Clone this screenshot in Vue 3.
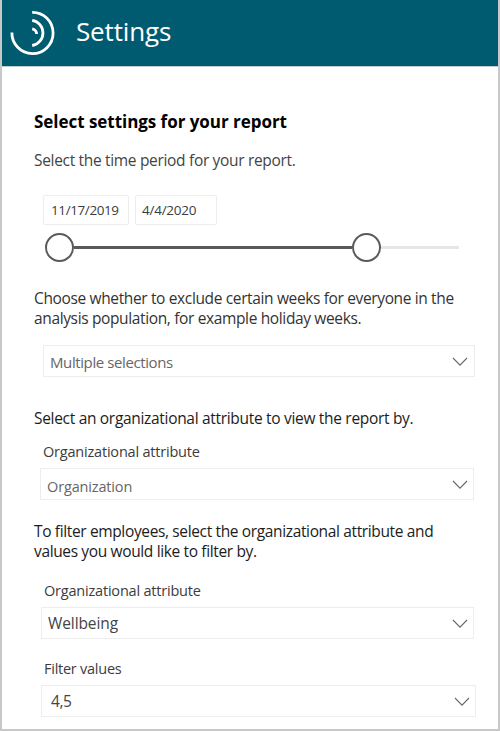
<script setup>
import { ref } from 'vue'

const start = ref('11/17/2019')
const end = ref('4/4/2020')
</script>

<template>
  <main class="panel">
    <header class="header">
      <svg class="logo" width="46" height="46" viewBox="0 0 46 46" fill="none" stroke="#fff" stroke-width="2.8">
        <path d="M22.2 2.4A20.6 20.6 0 1 1 1.9 22.5" />
        <path d="M22.2 10.4A12.7 12.7 0 0 1 22.2 35.5" />
        <path d="M22.2 18.8A5.2 5.2 0 0 1 26.6 24" />
      </svg>
      <h1 class="title">Settings</h1>
    </header>

    <section class="content">
      <h2 class="heading">Select settings for your report</h2>
      <p class="text period">Select the time period for your report.</p>

      <div class="dates">
        <span class="date first">{{ start }}</span>
        <span class="date second">{{ end }}</span>
      </div>
      <div class="slider">
        <i class="knob"></i>
        <i class="range"></i>
        <i class="knob"></i>
        <i class="rest"></i>
      </div>

      <p class="text exclude">Choose whether to exclude certain weeks for everyone in the<br />analysis population, for example holiday weeks.</p>
      <div class="select weeks">
        <span>Multiple selections</span>
        <svg width="16" height="10" viewBox="0 0 16 10"><path d="M1 1L8 8.2L15 1" /></svg>
      </div>

      <p class="text view">Select an organizational attribute to view the report by.</p>
      <p class="label view-label">Organizational attribute</p>
      <div class="select organization">
        <span>Organization</span>
        <svg width="16" height="10" viewBox="0 0 16 10"><path d="M1 1L8 8.2L15 1" /></svg>
      </div>

      <p class="text filter">To filter employees, select the organizational attribute and<br />values you would like to filter by.</p>
      <p class="label filter-label">Organizational attribute</p>
      <div class="select wellbeing">
        <span>Wellbeing</span>
        <svg width="16" height="10" viewBox="0 0 16 10"><path d="M1 1L8 8.2L15 1" /></svg>
      </div>
      <p class="label values-label">Filter values</p>
      <div class="select values">
        <span>4,5</span>
        <svg width="16" height="10" viewBox="0 0 16 10"><path d="M1 1L8 8.2L15 1" /></svg>
      </div>
    </section>
  </main>
</template>

<style>
body { margin: 0; background: #fff; }
</style>

<style scoped>
* { box-sizing: border-box; }
.panel {
  width: 500px;
  height: 731px;
  border: 2px solid #c8c8c8;
  border-top: 0;
  background: #fff;
  font-family: "Open Sans", "Noto Sans", sans-serif;
  overflow: hidden;
}
.header {
  display: flex;
  height: 67px;
  padding: 10px 0 0 8px;
  background: #005b70;
  border-bottom: 1px solid #c2ccd0;
}
.logo { flex: none; }
.title {
  margin: 3px 0 0 20px;
  font-size: 26px;
  line-height: 36px;
  font-weight: 400;
  letter-spacing: -0.15px;
  color: #fff;
}
.content { padding: 45px 0 0 32px; white-space: nowrap; }
.heading {
  margin: 0;
  font-size: 17px;
  line-height: 20px;
  font-weight: 700;
  letter-spacing: -0.04px;
  color: #000;
}
.text, .label { margin: 0; font-size: 15.5px; line-height: 20px; letter-spacing: -0.36px; color: #333; }
.label { font-size: 14.5px; letter-spacing: -0.2px; padding-left: 10px; color: #3c3c3c; }
.text.period { margin-top: 18px; letter-spacing: -0.32px; color: #444; }
.dates { display: flex; gap: 6px; margin: 25px 0 0 9px; }
.date {
  height: 30px;
  padding-left: 7px;
  border: 1px solid #ededed;
  border-radius: 2px;
  font-size: 13.5px;
  line-height: 28px;
  letter-spacing: -0.4px;
  color: #3c3c3c;
}
.first { width: 86px; }
.second { width: 82px; padding-left: 6px; letter-spacing: -0.25px; }
.slider { display: flex; align-items: center; width: 414px; height: 29px; margin: 8px 0 0 11px; }
.knob { flex: none; width: 29px; height: 29px; border: 2px solid #5a5a5a; border-radius: 50%; }
.range { flex: none; width: 278px; height: 3px; background: #5a5a5a; }
.rest { flex: 1; height: 3px; background: #e6e6e6; }
.exclude { margin-top: 26px; }
.select {
  display: flex;
  justify-content: space-between;
  width: 434px;
  height: 32px;
  padding: 0 5px 0 6px;
  border: 1px solid #ededed;
  font-size: 15px;
  line-height: 32px;
  letter-spacing: -0.4px;
  color: #444;
}
.select svg { flex: none; margin-top: 11px; fill: none; stroke: #666; stroke-width: 1.1; }
.weeks { width: 432px; margin: 17px 0 0 9px; padding-right: 6px; color: #666; line-height: 33px; }
.text.view { margin-top: 31px; letter-spacing: -0.31px; color: #1c1c1c; }
.view-label { margin-top: 14px; padding-left: 9px; }
.organization { margin: 6px 0 0 6px; font-size: 14.5px; letter-spacing: -0.15px; line-height: 35px; color: #666; }
.filter { margin-top: 21px; color: #1c1c1c; }
.filter-label { margin-top: 20px; }
.wellbeing { width: 433px; margin: 6px 0 0 7px; font-size: 15.5px; letter-spacing: -0.1px; line-height: 31px; }
.values-label { margin-top: 20px; letter-spacing: -0.25px; }
.values { width: 435px; margin: 6px 0 0 7px; padding-left: 9px; font-size: 15.5px; line-height: 31px; }
</style>
